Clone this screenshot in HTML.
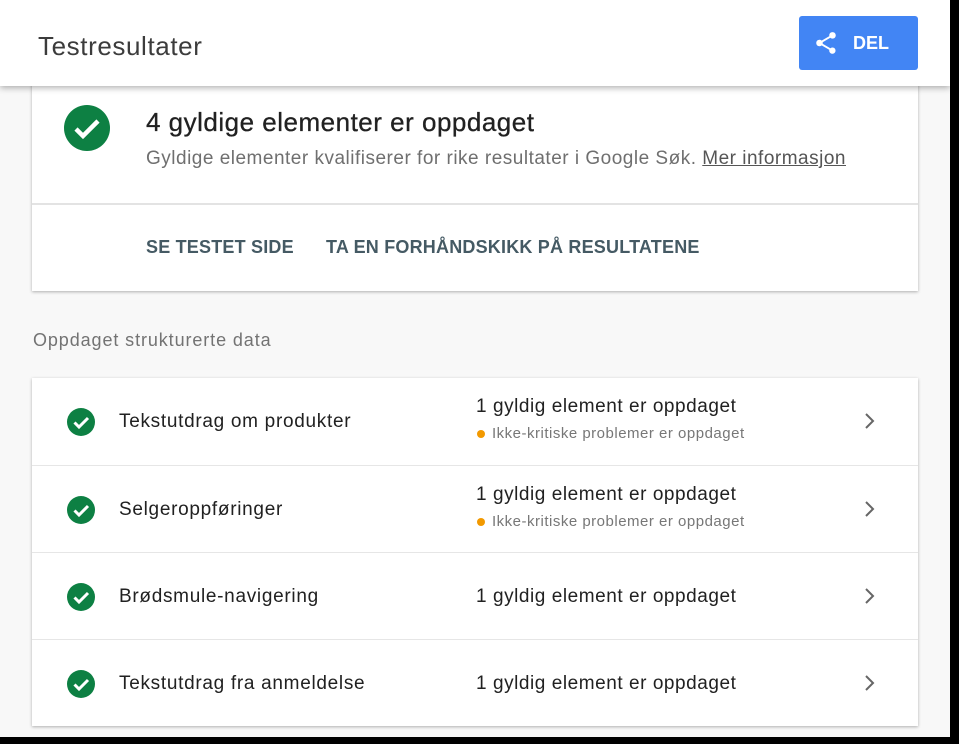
<!DOCTYPE html>
<html><head><meta charset="utf-8"><style>
*{margin:0;padding:0;box-sizing:border-box}
body{width:959px;height:744px;overflow:hidden;background:#000;font-family:"Liberation Sans",sans-serif;position:relative}
.page{position:absolute;left:0;top:0;width:950px;height:737px;background:#f8f8f8;overflow:hidden}
.hdr{position:absolute;left:0;top:0;width:950px;height:86px;background:#fff;box-shadow:0 2px 6px rgba(0,0,0,.3);z-index:2}
.hdr h1{position:absolute;left:38px;top:31px;font-size:26px;font-weight:normal;color:#3c3c3c;letter-spacing:.6px}
.btn{position:absolute;left:799px;top:16px;width:119px;height:54px;background:#4285f4;border-radius:3px;color:#fff;font-size:18px;font-weight:bold}
.btn span{position:absolute;left:54px;top:17px}
.card{position:absolute;left:32px;width:886px;background:#fff;box-shadow:0 1px 3px rgba(0,0,0,.3)}
.c1{top:80px;height:211px}
.t1{position:absolute;left:114px;top:27px;font-size:26px;color:#212121;letter-spacing:.5px;-webkit-text-stroke:.3px #212121}
.s1{position:absolute;left:114px;top:68px;font-size:19px;color:#6f6f6f;letter-spacing:.5px}
.s1 u{color:#555}
.div{position:absolute;left:0;top:123px;width:100%;height:2px;background:#e3e3e3}
.lk{position:absolute;top:157px;font-size:18px;font-weight:bold;color:#455a64;letter-spacing:.2px}
.sec{position:absolute;left:33px;top:330px;font-size:18px;color:#737373;letter-spacing:.9px}
.c2{top:378px;height:348px}
.row{position:absolute;left:0;width:100%;height:87px;border-top:1px solid #e6e6e6}
.row:first-child{border-top:none}
.nm{position:absolute;left:87px;top:33px;font-size:19px;color:#212121;letter-spacing:.7px}
.st{position:absolute;left:444px;font-size:19px;color:#212121;letter-spacing:.55px}
.sub{position:absolute;left:444px;top:47px;font-size:15px;color:#777;letter-spacing:.5px}
.sub i{display:inline-block;width:8px;height:8px;border-radius:50%;background:#f29900;margin:0 7px 1px 1px;vertical-align:middle}
.ic{position:absolute;left:35px;top:30px}
.ch{position:absolute;left:831px;top:35px}
</style></head><body><div class="page">
<div class="hdr"><h1>Testresultater</h1>
<div class="btn"><svg style="position:absolute;left:14px;top:14px" width="26" height="26" viewBox="0 0 24 24"><path fill="#fff" d="M18 16.1c-.8 0-1.4.3-2 .8l-7.1-4.2c.1-.2.1-.5.1-.7s0-.5-.1-.7L16 7.2c.5.5 1.2.8 2 .8 1.7 0 3-1.3 3-3s-1.3-3-3-3-3 1.3-3 3c0 .2 0 .5.1.7L8 9.8C7.5 9.300 6.8 9 6 9c-1.7 0-3 1.3-3 3s1.3 3 3 3c.8 0 1.5-.3 2-.8l7.1 4.2c-.1.2-.1.4-.1.6 0 1.6 1.3 2.9 2.9 2.9s2.9-1.3 2.9-2.9-1.2-2.9-2.8-2.9z"/></svg><span>DEL</span></div></div>
<div class="card c1">
<svg style="position:absolute;left:32px;top:25px" width="46" height="46" viewBox="0 0 46 46"><circle cx="23" cy="23" r="23" fill="#0d8043"/><path d="M12 24l7 7 15-15" stroke="#fff" stroke-width="4.5" fill="none"/></svg>
<div class="t1">4 gyldige elementer er oppdaget</div>
<div class="s1">Gyldige elementer kvalifiserer for rike resultater i Google Søk. <u>Mer informasjon</u></div>
<div class="div"></div>
<div class="lk" style="left:114px">SE TESTET SIDE</div>
<div class="lk" style="left:294px">TA EN FORHÅNDSKIKK PÅ RESULTATENE</div>
</div>
<div class="sec">Oppdaget strukturerte data</div>
<div class="card c2">
<div class="row" style="top:0"><svg class="ic" width="28" height="28" viewBox="0 0 28 28"><circle cx="14" cy="14" r="14" fill="#0d8043"/><path d="M7.5 14.5l4.5 4.5 9-9" stroke="#fff" stroke-width="3" fill="none"/></svg><div class="nm">Tekstutdrag om produkter</div><div class="st" style="top:18px">1 gyldig element er oppdaget</div><div class="sub"><i></i>Ikke-kritiske problemer er oppdaget</div><svg class="ch" width="14" height="16" viewBox="0 0 14 16"><path d="M3 1l7 7-7 7" stroke="#666" stroke-width="2" fill="none"/></svg></div>
<div class="row" style="top:87px"><svg class="ic" width="28" height="28" viewBox="0 0 28 28"><circle cx="14" cy="14" r="14" fill="#0d8043"/><path d="M7.5 14.5l4.5 4.5 9-9" stroke="#fff" stroke-width="3" fill="none"/></svg><div class="nm">Selgeroppføringer</div><div class="st" style="top:18px">1 gyldig element er oppdaget</div><div class="sub"><i></i>Ikke-kritiske problemer er oppdaget</div><svg class="ch" width="14" height="16" viewBox="0 0 14 16"><path d="M3 1l7 7-7 7" stroke="#666" stroke-width="2" fill="none"/></svg></div>
<div class="row" style="top:174px"><svg class="ic" width="28" height="28" viewBox="0 0 28 28"><circle cx="14" cy="14" r="14" fill="#0d8043"/><path d="M7.5 14.5l4.5 4.5 9-9" stroke="#fff" stroke-width="3" fill="none"/></svg><div class="nm">Brødsmule-navigering</div><div class="st" style="top:33px">1 gyldig element er oppdaget</div><svg class="ch" width="14" height="16" viewBox="0 0 14 16"><path d="M3 1l7 7-7 7" stroke="#666" stroke-width="2" fill="none"/></svg></div>
<div class="row" style="top:261px"><svg class="ic" width="28" height="28" viewBox="0 0 28 28"><circle cx="14" cy="14" r="14" fill="#0d8043"/><path d="M7.5 14.5l4.5 4.5 9-9" stroke="#fff" stroke-width="3" fill="none"/></svg><div class="nm">Tekstutdrag fra anmeldelse</div><div class="st" style="top:33px">1 gyldig element er oppdaget</div><svg class="ch" width="14" height="16" viewBox="0 0 14 16"><path d="M3 1l7 7-7 7" stroke="#666" stroke-width="2" fill="none"/></svg></div>
</div>
</div></body></html>
